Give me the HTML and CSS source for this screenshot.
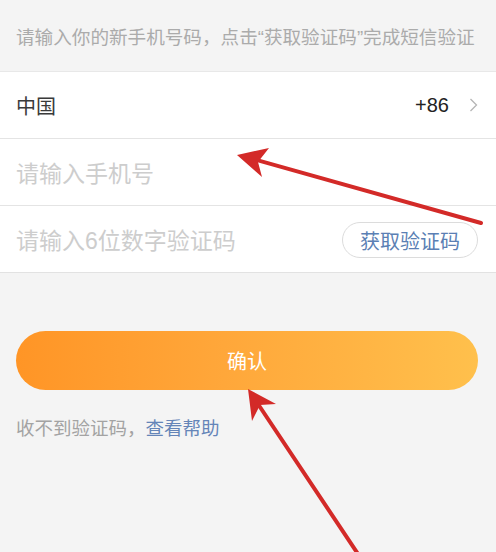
FILE: index.html
```html
<!DOCTYPE html>
<html lang="zh-CN">
<head>
    <meta charset="UTF-8">
    <meta name="viewport" content="width=device-width, initial-scale=1.0">
    <title>更换手机号</title>
    <link rel="stylesheet" href="styles.css">
</head>
<body>
    <div class="page">
        <p class="tip">请输入你的新手机号码，点击“获取验证码”完成短信验证</p>

        <form class="form" id="phoneForm">
            <div class="row country">
                <span class="country-name">中国</span>
                <span class="country-code">+86</span>
                <svg class="chevron" width="9" height="14" viewBox="0 0 9 14">
                    <path d="M1.5 1 L7.5 7 L1.5 13" fill="none" stroke="#b5b5b5" stroke-width="1.3"/>
                </svg>
            </div>
            <div class="row">
                <input type="tel" class="field" name="phone" placeholder="请输入手机号">
            </div>
            <div class="row">
                <input type="text" class="field" name="code" placeholder="请输入6位数字验证码">
                <button type="button" class="code-btn">获取验证码</button>
            </div>
        </form>

        <div class="actions">
            <button type="button" class="submit-btn">确认</button>
            <p class="help">收不到验证码，<a href="#" class="help-link">查看帮助</a></p>
        </div>

        <!-- annotation arrows -->
        <svg class="marks" width="496" height="552" viewBox="0 0 496 552">
            <g stroke="#d32a28" stroke-width="4" stroke-linecap="round" fill="none">
                <line x1="481" y1="223" x2="246" y2="157"/>
                <line x1="362" y1="560" x2="254" y2="398"/>
            </g>
            <g fill="#d32a28">
                <path d="M237 155 L269 148 L258 162 L262 177 Z"/>
                <path d="M248 389 L276 404 L260 405 L252 421 Z"/>
            </g>
        </svg>
    </div>
</body>
</html>
```

FILE: styles.css
```css
body {
    margin: 0;
    padding: 0;
    background-color: #f4f4f4;
    font-family: "Liberation Sans", "Noto Sans CJK SC", sans-serif;
}
.page {
    position: relative;
    width: 496px;
    height: 552px;
    overflow: hidden;
}
.tip {
    margin: 0;
    height: 71px;
    padding: 0 16px;
    display: flex;
    align-items: center;
    font-size: 18.6px;
    color: #ababab;
    white-space: nowrap;
}
.form {
    margin: 0;
    background-color: #fff;
    border-top: 1px solid #e8e8e8;
    border-bottom: 1px solid #e2e2e2;
}
.row {
    height: 66px;
    padding: 0 18px 0 16px;
    display: flex;
    align-items: center;
    border-bottom: 1px solid #e4e4e4;
}
.row:last-child {
    border-bottom: none;
}
.country-name {
    flex: 1;
    font-size: 20px;
    color: #3a3a3a;
}
.country-code {
    font-size: 20px;
    color: #222;
    margin-right: 20px;
}
.chevron {
    display: block;
}
.field {
    flex: 1;
    min-width: 0;
    border: none;
    outline: none;
    padding: 4px 0 0;
    font-family: inherit;
    font-size: 23px;
    color: #333;
    background: transparent;
}
.field::placeholder {
    color: #cdcdcd;
}
.code-btn {
    width: 136px;
    height: 36px;
    margin-top: 2px;
    border: 1px solid #dcdcdc;
    border-radius: 18px;
    background: #fff;
    font-family: inherit;
    font-size: 20px;
    color: #5b7fb4;
    padding: 0;
}
.actions {
    padding: 58px 18px 0 16px;
}
.submit-btn {
    display: block;
    width: 100%;
    height: 59px;
    border: none;
    border-radius: 30px;
    background: linear-gradient(to right, #ff9526, #ffa73a 45%, #ffc04c);
    font-family: inherit;
    font-size: 20px;
    color: #fff;
}
.help {
    margin: 24px 0 0;
    font-size: 18.5px;
    color: #a3a3a3;
}
.help-link {
    color: #6585b8;
    text-decoration: none;
}
.marks {
    position: absolute;
    left: 0;
    top: 0;
    pointer-events: none;
}
```
